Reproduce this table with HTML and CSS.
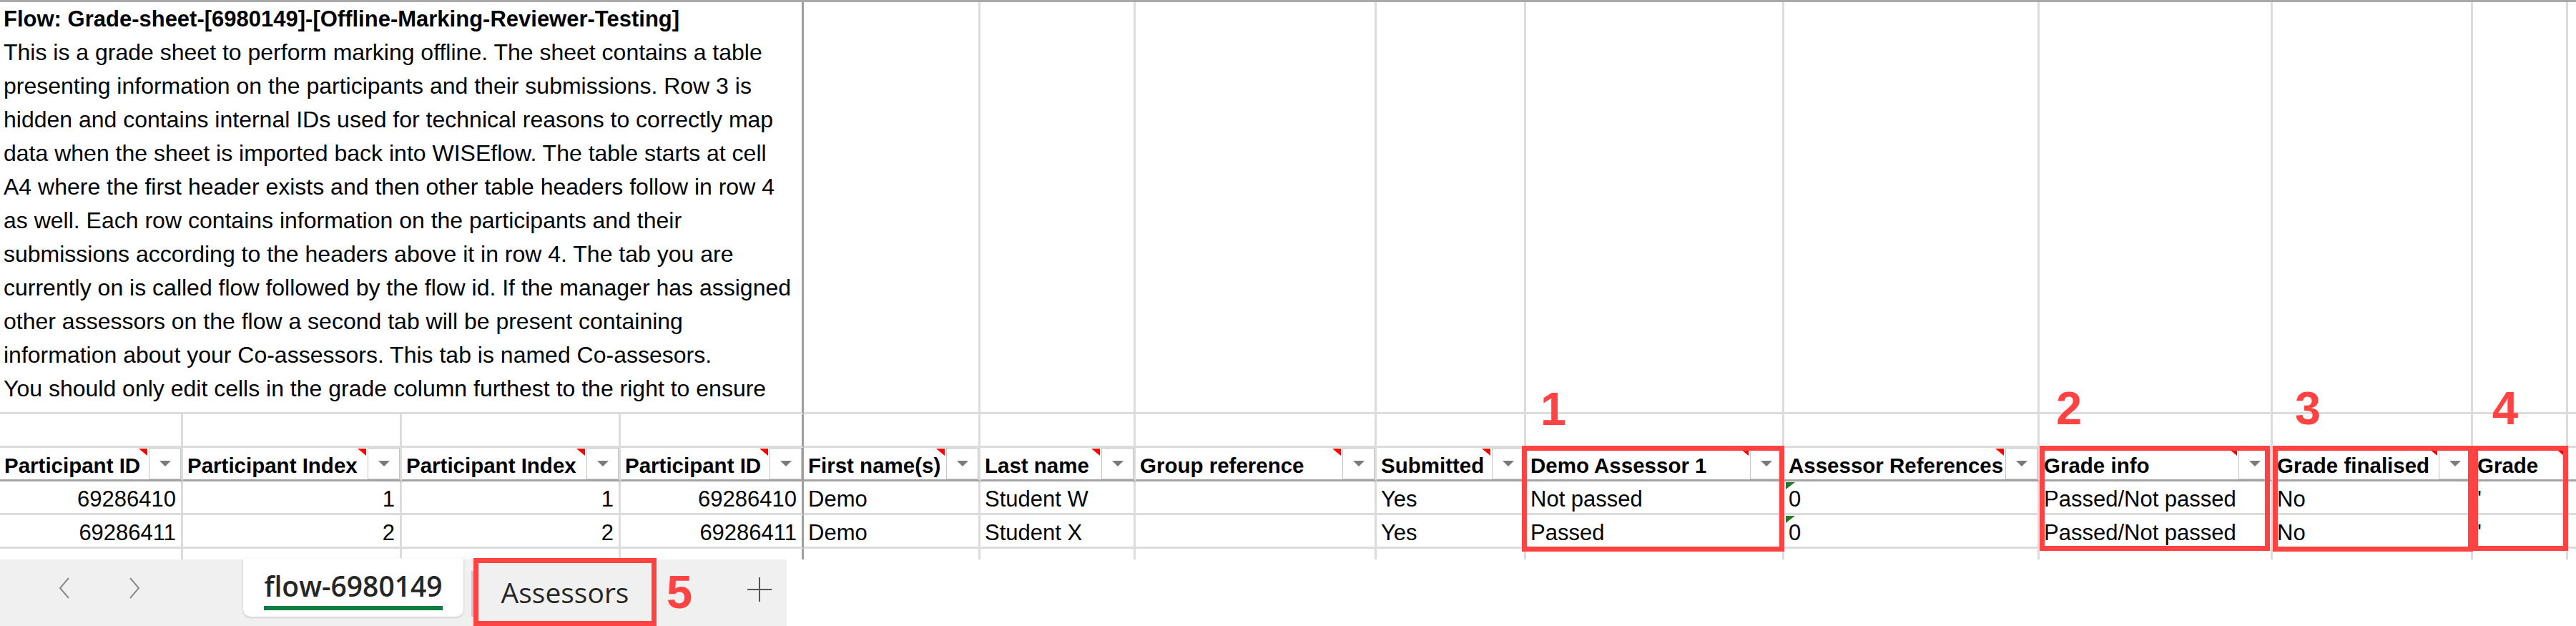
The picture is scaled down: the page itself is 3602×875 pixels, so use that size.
FILE: index.html
```html
<!DOCTYPE html>
<html lang="en">
<head>
<meta charset="utf-8">
<title>Grade sheet - flow-6980149</title>
<link rel="stylesheet" href="styles.css">
</head>
<body>
<div class="page">
  <div class="sheet">
    <!-- row 1 -->
    <div class="c intro frz">
      <div class="title">Flow: Grade-sheet-[6980149]-[Offline-Marking-Reviewer-Testing]</div>
      <div class="para">This is a grade sheet to perform marking offline. The sheet contains a table<br>presenting information on the participants and their submissions. Row 3 is<br>hidden and contains internal IDs used for technical reasons to correctly map<br>data when the sheet is imported back into WISEflow. The table starts at cell<br>A4 where the first header exists and then other table headers follow in row 4<br>as well. Each row contains information on the participants and their<br>submissions according to the headers above it in row 4. The tab you are<br>currently on is called flow followed by the flow id. If the manager has assigned<br>other assessors on the flow a second tab will be present containing<br>information about your Co-assessors. This tab is named Co-assesors.<br>You should only edit cells in the grade column furthest to the right to ensure</div>
    </div>
    <div class="c"></div><div class="c"></div><div class="c"></div><div class="c"></div><div class="c"></div>
    <div class="c"></div><div class="c"></div><div class="c"></div><div class="c"></div><div class="c last"></div>

    <!-- row 2 -->
    <div class="c"></div><div class="c"></div><div class="c"></div><div class="c frz"></div>
    <div class="c"></div><div class="c"></div><div class="c"></div><div class="c"></div><div class="c"></div>
    <div class="c"></div><div class="c"></div><div class="c"></div><div class="c"></div><div class="c last"></div>

    <!-- header row -->
    <div class="c h"><span class="lbl">Participant ID</span><span class="note"></span><span class="dd"></span></div>
    <div class="c h"><span class="lbl">Participant Index</span><span class="note"></span><span class="dd"></span></div>
    <div class="c h"><span class="lbl">Participant Index</span><span class="note"></span><span class="dd"></span></div>
    <div class="c h frz"><span class="lbl">Participant ID</span><span class="note"></span><span class="dd"></span></div>
    <div class="c h"><span class="lbl">First name(s)</span><span class="note"></span><span class="dd"></span></div>
    <div class="c h"><span class="lbl">Last name</span><span class="note"></span><span class="dd"></span></div>
    <div class="c h"><span class="lbl">Group reference</span><span class="note"></span><span class="dd"></span></div>
    <div class="c h"><span class="lbl">Submitted</span><span class="note"></span><span class="dd"></span></div>
    <div class="c h"><span class="lbl">Demo Assessor 1</span><span class="note"></span><span class="dd"></span></div>
    <div class="c h"><span class="lbl">Assessor References</span><span class="note"></span><span class="dd"></span></div>
    <div class="c h"><span class="lbl">Grade info</span><span class="note"></span><span class="dd"></span></div>
    <div class="c h"><span class="lbl">Grade finalised</span><span class="note"></span><span class="dd"></span></div>
    <div class="c h"><span class="lbl">Grade</span><span class="note corner"></span></div>
    <div class="c h last"></div>

    <!-- data row 1 -->
    <div class="c num">69286410</div>
    <div class="c num">1</div>
    <div class="c num">1</div>
    <div class="c num frz">69286410</div>
    <div class="c">Demo</div>
    <div class="c">Student W</div>
    <div class="c"></div>
    <div class="c">Yes</div>
    <div class="c">Not passed</div>
    <div class="c"><span class="warn"></span>0</div>
    <div class="c">Passed/Not passed</div>
    <div class="c">No</div>
    <div class="c">'</div>
    <div class="c last"></div>

    <!-- data row 2 -->
    <div class="c num">69286411</div>
    <div class="c num">2</div>
    <div class="c num">2</div>
    <div class="c num frz">69286411</div>
    <div class="c">Demo</div>
    <div class="c">Student X</div>
    <div class="c"></div>
    <div class="c">Yes</div>
    <div class="c">Passed</div>
    <div class="c"><span class="warn"></span>0</div>
    <div class="c">Passed/Not passed</div>
    <div class="c">No</div>
    <div class="c">'</div>
    <div class="c last"></div>

    <!-- row 7 (partially visible) -->
    <div class="c"></div><div class="c"></div><div class="c"></div><div class="c frz"></div>
    <div class="c"></div><div class="c"></div><div class="c"></div><div class="c"></div><div class="c"></div>
    <div class="c"></div><div class="c"></div><div class="c"></div><div class="c"></div><div class="c last"></div>
  </div>

  <div class="tabbar">
    <div class="nav">
      <svg class="arrow" viewBox="0 0 20 30"><polyline points="16,1 4,15 16,29"/></svg>
      <svg class="arrow" viewBox="0 0 20 30"><polyline points="4,1 16,15 4,29"/></svg>
    </div>
    <div class="tab-active"><span class="label">flow-6980149</span></div>
    <div class="sep"></div>
    <div class="tab">Assessors</div>
    <svg class="add" viewBox="0 0 34 34"><line x1="17" y1="0" x2="17" y2="34"/><line x1="0" y1="17" x2="34" y2="17"/></svg>
  </div>

  <!-- annotations -->
  <div class="box b1"></div>
  <div class="box b2"></div>
  <div class="box b3"></div>
  <div class="box b4"></div>
  <div class="box b5"></div>
  <div class="anno n1">1</div>
  <div class="anno n2">2</div>
  <div class="anno n3">3</div>
  <div class="anno n4">4</div>
  <div class="anno n5">5</div>
</div>
</body>
</html>
```

FILE: styles.css
```css
html, body {
  margin: 0;
  padding: 0;
  background: #fff;
}

body {
  width: 3602px;
  height: 875px;
  overflow: hidden;
  font-family: "Liberation Sans", Arial, sans-serif;
  color: #000;
}

.page {
  position: relative;
  width: 3602px;
  height: 875px;
}

/* ---------- sheet grid ---------- */
.sheet {
  display: grid;
  grid-template-columns: 256px 306px 306px 256px 247px 217px 337px 209px 361px 357px 326px 280px 133px 11px;
  grid-template-rows: 576px 47px 47px 47px 47px 47px;
  height: 782px;
  box-sizing: border-box;
  border-top: 3px solid #a8a8a8;
  overflow: hidden;
}

.c {
  position: relative;
  box-sizing: border-box;
  border-right: 3px solid #dcdcdc;
  border-bottom: 3px solid #dcdcdc;
  padding: 7px 6px 0;
  font-size: 31px;
  line-height: 35px;
  white-space: nowrap;
  overflow: hidden;
}

.num {
  text-align: right;
  padding-right: 7px;
}

.frz {
  border-right-color: #9e9e9e;
}

.last {
  border-right: 0;
}

.intro {
  grid-column: span 4;
  padding: 0 5px;
  font-size: 32px;
  line-height: 47px;
  overflow: visible;
}

.title {
  font-weight: bold;
  font-size: 31px;
}

/* header row */
.h {
  display: flex;
  padding: 0 0 0 6px;
  border-bottom-color: #a3a3a3;
  font-weight: bold;
  font-size: 29.5px;
}

.h .lbl {
  flex: 1;
  min-width: 0;
  overflow: hidden;
  padding-top: 7px;
  line-height: 35px;
}

.dd {
  flex: none;
  width: 45px;
  box-sizing: border-box;
  border: 1px solid #c6c6c6;
  background: #fff;
  display: flex;
  align-items: center;
  justify-content: center;
}

.dd::before {
  content: "";
  width: 0;
  height: 0;
  border-left: 8.5px solid transparent;
  border-right: 8.5px solid transparent;
  border-top: 8px solid #7a7a7a;
}

.note {
  position: absolute;
  top: 1px;
  right: 47px;
  width: 0;
  height: 0;
  border-top: 10px solid #ff0000;
  border-left: 12px solid transparent;
}

.note.corner {
  right: 3px;
}

.warn {
  position: absolute;
  top: 1px;
  left: 2px;
  width: 0;
  height: 0;
  border-top: 10px solid #1f7d1f;
  border-right: 13px solid transparent;
}

/* ---------- sheet tabs ---------- */
.tabbar {
  display: flex;
  align-items: flex-start;
  width: 1100px;
  height: 93px;
  background: #f0f0f0;
  font-family: "Open Sans", "Liberation Sans", sans-serif;
  color: #262626;
}

.nav {
  display: flex;
  gap: 78px;
  width: 340px;
  box-sizing: border-box;
  padding: 25px 0 0 80px;
}

.arrow {
  width: 20px;
  height: 30px;
  fill: none;
  stroke: #8a8a8a;
  stroke-width: 2;
}

.tab-active {
  position: relative;
  width: 308px;
  height: 82px;
  margin-top: -2px;
  box-sizing: border-box;
  padding-top: 19px;
  background: #fff;
  border-radius: 0 0 10px 10px;
  box-shadow: 0 1px 3px rgba(0, 0, 0, 0.22);
  text-align: center;
}

.tab-active .label {
  display: inline-block;
  font-size: 39px;
  line-height: 39px;
  font-weight: 600;
  padding-bottom: 9px;
  border-bottom: 6px solid #107c41;
}

.sep {
  width: 3px;
  height: 64px;
  margin: 16px 0 0 11px;
  background: #c9c9c9;
}

.tab {
  width: 256px;
  height: 93px;
  box-sizing: border-box;
  padding-top: 26px;
  text-align: center;
  font-size: 39px;
  line-height: 39px;
}

.add {
  width: 34px;
  height: 34px;
  margin: 25px 0 0 127px;
  stroke: #555;
  stroke-width: 2;
}

/* ---------- red annotations ---------- */
.box {
  position: absolute;
  box-sizing: border-box;
  border: 7px solid #ff4343;
}

.b1 { left: 2128px; top: 623px; width: 367px; height: 148px; }
.b2 { left: 2852px; top: 623px; width: 322px; height: 147px; }
.b3 { left: 3178px; top: 623px; width: 280px; height: 148px; }
.b4 { left: 3458px; top: 623px; width: 133px; height: 147px; }
.b5 { left: 662px; top: 780px; width: 256px; height: 95px; }

.anno {
  position: absolute;
  font-family: "Liberation Sans", Arial, sans-serif;
  font-weight: bold;
  font-size: 65px;
  line-height: 65px;
  color: #ff4343;
}

.n1 { left: 2154px; top: 539px; }
.n2 { left: 2875px; top: 538px; }
.n3 { left: 3209px; top: 538px; }
.n4 { left: 3485px; top: 538px; }
.n5 { left: 932px; top: 795px; }
```
